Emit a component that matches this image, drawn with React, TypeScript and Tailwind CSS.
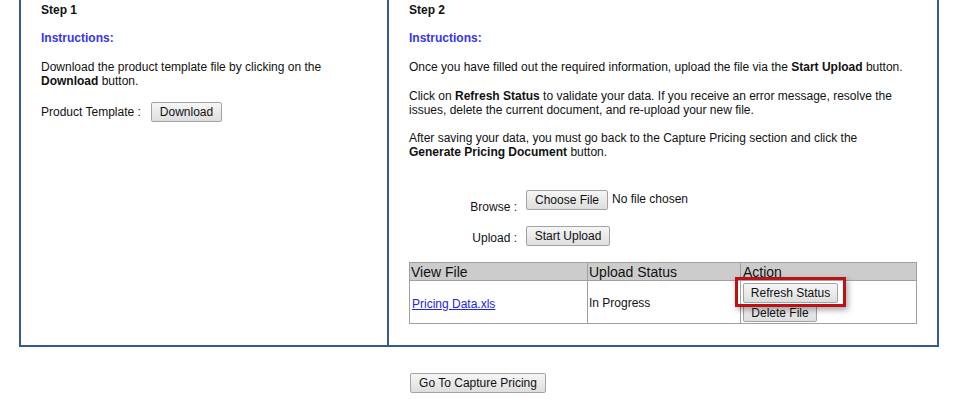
const btn =
  'inline-flex items-center justify-center whitespace-nowrap rounded-[2px] border border-[#a3a3a3] bg-gradient-to-b from-[#f6f6f6] to-[#dedede] px-[4px] text-[12px] leading-[14px] text-[#111]';

function Left() {
  return (
    <div className="w-[368px] shrink-0 border-r-2 border-[#33599b] px-[20px] pt-[3px]">
      <div className="h-[14px] font-bold">Step 1</div>
      <div className="mt-[14px] h-[14px] font-bold text-[#3535f0]">Instructions:</div>
      <p className="mt-[15px] w-[300px]">
        Download the product template file by clicking on the <b>Download</b> button.
      </p>
      <div className="mt-[14px] flex items-center">
        <span className="w-[110px]">Product Template :</span>
        <button className={`${btn} h-[20px] w-[71px]`}>Download</button>
      </div>
    </div>
  );
}

function Right() {
  return (
    <div className="flex-1 px-[20px] pt-[3px] pb-[21px]">
      <div className="h-[14px] font-bold">Step 2</div>
      <div className="mt-[14px] h-[14px] font-bold text-[#3535f0]">Instructions:</div>
      <div className="w-[498px]">
        <p className="mt-[15px]">
          Once you have filled out the required information, upload the file via the{' '}
          <b>Start Upload</b> button.
        </p>
        <p className="mt-[15px]">
          Click on <b>Refresh Status</b> to validate your data. If you receive an error message, resolve the
          issues, delete the current document, and re-upload your new file.
        </p>
        <p className="mt-[14px]">
          After saving your data, you must go back to the Capture Pricing section and click the{' '}
          <b>Generate Pricing Document</b> button.
        </p>
      </div>

      <div className="mt-[31px] flex h-[20px] items-start">
        <span className="w-[117px] shrink-0 pt-[10px] pr-[9px] text-right">Browse :</span>
        <button className={`${btn} h-[20px] w-[82px] text-[#8a8a8a]`}>Choose File</button>
        <span className="ml-[4px] pt-[2px]">No file chosen</span>
      </div>
      <div className="mt-[16px] flex h-[20px] items-start">
        <span className="w-[117px] shrink-0 pt-[5px] pr-[9px] text-right">Upload :</span>
        <button className={`${btn} h-[20px] w-[84px]`}>Start Upload</button>
      </div>

      <table className="mt-[16px] w-[508px] border-collapse border border-[#a0a0a0] text-left">
        <thead>
          <tr className="h-[18px] bg-[#cccccc] text-[14px] leading-[16px]">
            <th className="w-[178px] border border-[#a0a0a0] px-[1px] font-normal">View File</th>
            <th className="w-[153px] border border-[#a0a0a0] px-[1px] font-normal">Upload Status</th>
            <th className="border border-[#a0a0a0] px-[2px] font-normal">Action</th>
          </tr>
        </thead>
        <tbody>
          <tr className="h-[43px]">
            <td className="border border-[#a0a0a0] px-[2px] pt-[3px]">
              <a href="#" className="text-[#2222ee] underline">Pricing Data.xls</a>
            </td>
            <td className="border border-[#a0a0a0] px-[1px] pt-[1px]">In Progress</td>
            <td className="border border-[#a0a0a0] px-[2px] py-[1px]">
              <div className="relative flex flex-col items-start gap-[1px]">
                <button className={`${btn} h-[20px] w-[95px]`}>Refresh Status</button>
                <button className={`${btn} h-[18px] w-[74px]`}>Delete File</button>
                <div className="pointer-events-none absolute left-[-8px] top-[-6px] h-[30px] w-[111px] border-[3px] border-[#bb1218] shadow-[2px_3px_6px_rgba(0,0,0,0.35)]" />
              </div>
            </td>
          </tr>
        </tbody>
      </table>
    </div>
  );
}

export default function App() {
  return (
    <div className="min-h-[407px] bg-white font-['Liberation_Sans',Arial,sans-serif] text-[12px] leading-[14px] text-[#111]">
      <div className="ml-[19px] flex w-[920px] border-2 border-t-0 border-[#33599b]">
        <Left />
        <Right />
      </div>
      <div className="mt-[26px] ml-[410px]">
        <button className={`${btn} h-[20px] w-[136px]`}>Go To Capture Pricing</button>
      </div>
    </div>
  );
}
